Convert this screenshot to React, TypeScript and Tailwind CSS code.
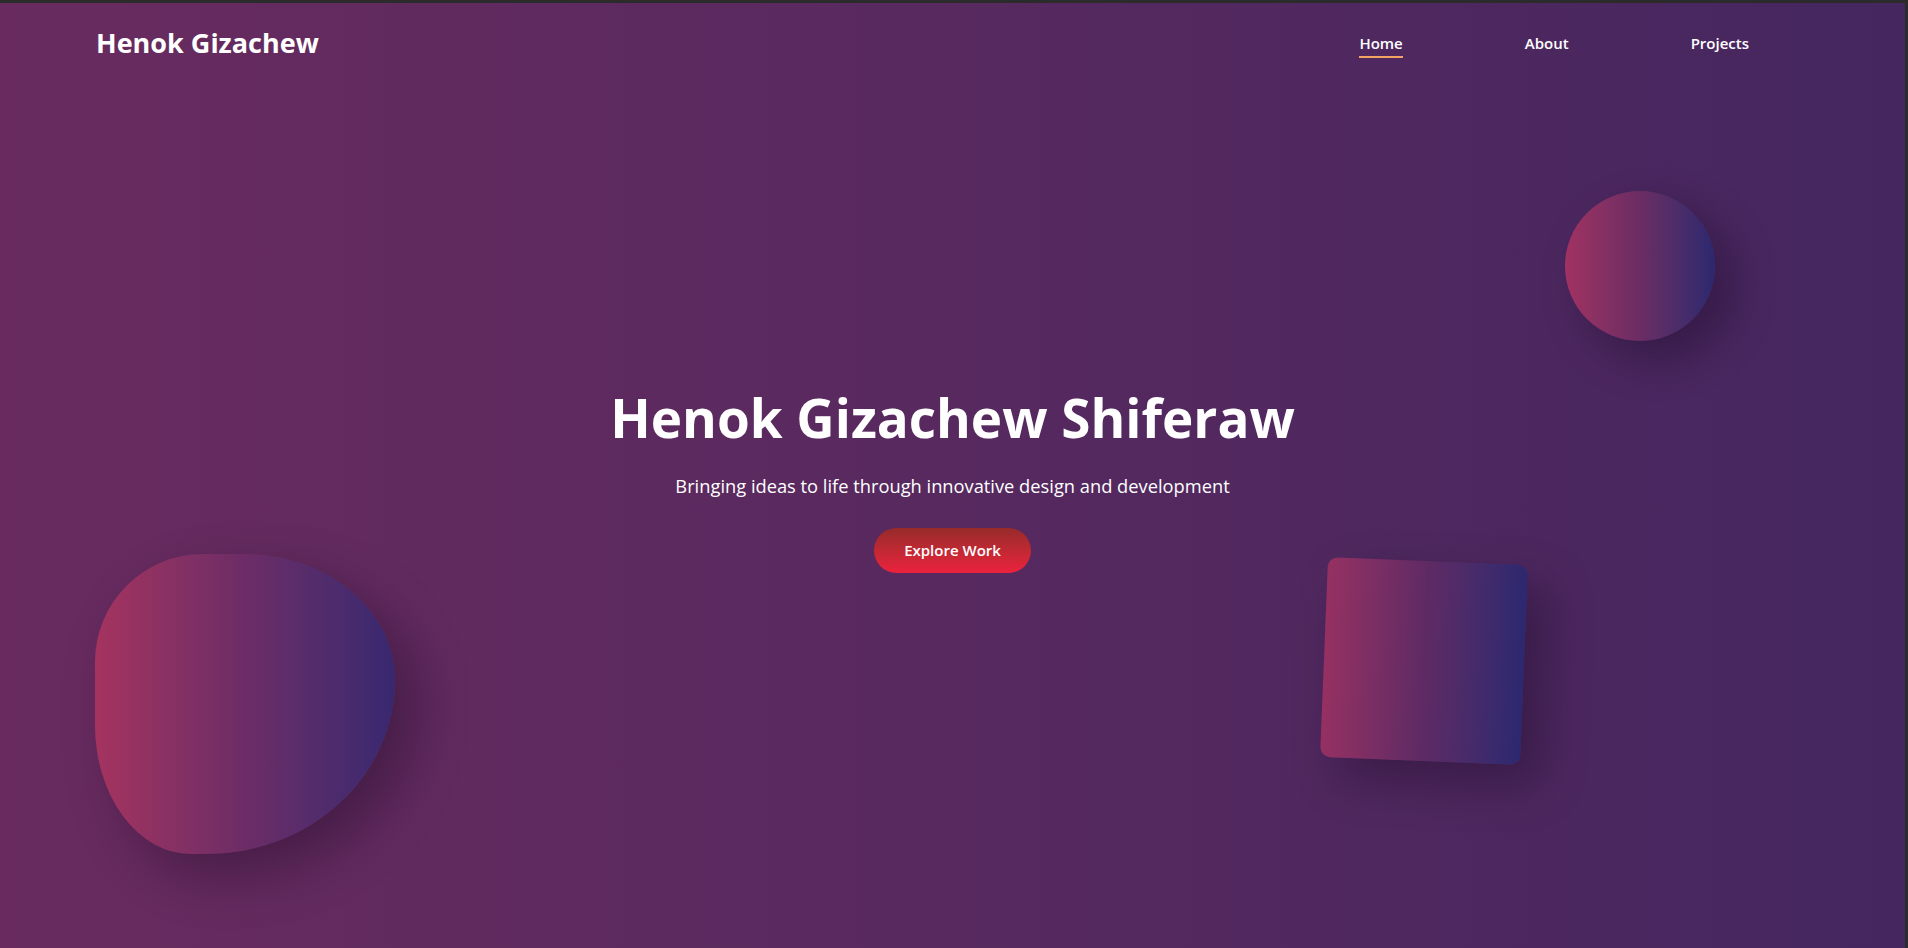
import React from 'react';

const links = [
  { label: 'Home', active: true },
  { label: 'About', active: false },
  { label: 'Projects', active: false },
];

function Header() {
  return (
    <header className="absolute top-0 left-0 right-0 z-10 flex items-start justify-between pl-[96px] pr-[156px]">
      <a href="#" className="mt-[24px] text-[27px] leading-[32px] font-bold text-white">
        Henok Gizachew
      </a>
      <nav className="mt-[29px] flex gap-[122px]">
        {links.map((link) => (
          <a key={link.label} href="#" className="flex flex-col text-[15px] leading-[22px] font-semibold text-white">
            {link.label}
            <span className={link.active ? 'mt-[2px] h-[2px] w-full bg-[#f4a261]' : 'mt-[2px] h-[2px] w-full bg-transparent'} />
          </a>
        ))}
      </nav>
    </header>
  );
}

function Shapes() {
  return (
    <>
      <div className="absolute left-[1565px] top-[188px] h-[150px] w-[150px] rounded-full bg-linear-to-r from-[#a13262] via-[#6b2c63] to-[#2c286f] shadow-[18px_18px_40px_rgba(20,5,30,0.35)]" />
      <div className="absolute left-[95px] top-[551px] h-[300px] w-[300px] rounded-[36%_50%_63%_32%/36%_42%_58%_43%] bg-linear-to-r from-[#a5335f] via-[#6c2c66] to-[#382870] shadow-[22px_22px_50px_rgba(20,5,30,0.35)]" />
      <div className="absolute left-[1324px] top-[558px] h-[200px] w-[200px] rotate-[2.3deg] rounded-[10px] bg-linear-to-r from-[#963062] via-[#5f2a64] to-[#2c2870] shadow-[20px_20px_45px_rgba(20,5,30,0.35)]" />
    </>
  );
}

export default function App() {
  return (
    <div className="h-[948px] w-full overflow-hidden border-t-[3px] border-r-[3px] border-[#2b2b2b] font-['Open_Sans',sans-serif]">
      <div className="relative h-full w-full bg-linear-to-r from-[#692b5f] to-[#45265f]">
        <Header />
        <Shapes />
        <section className="relative flex h-full flex-col items-center justify-center pt-[9px] text-center">
          <h1 className="text-[53px] leading-[62px] font-bold text-white">Henok Gizachew Shiferaw</h1>
          <p className="mt-[23px] text-[18.3px] leading-[28px] text-white">
            Bringing ideas to life through innovative design and development
          </p>
          <a
            href="#"
            className="mt-[28px] rounded-full bg-linear-to-b from-[#972a2a] to-[#ec213d] px-[30px] py-3 text-[15px] leading-[21px] font-semibold text-white"
          >
            Explore Work
          </a>
        </section>
      </div>
    </div>
  );
}
